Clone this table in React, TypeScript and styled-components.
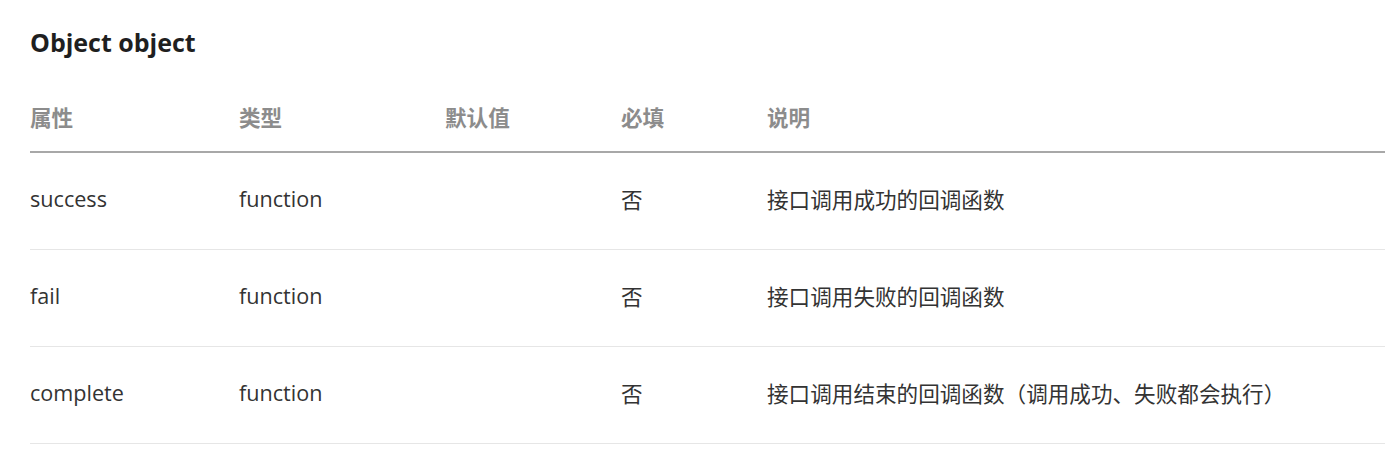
import React from 'react';
import styled, { createGlobalStyle } from 'styled-components';

const GlobalStyle = createGlobalStyle`
  html, body {
    margin: 0;
    padding: 0;
    background: #fff;
  }
  body {
    font-family: 'Open Sans', 'Noto Sans CJK SC', sans-serif;
  }
`;

const Page = styled.div`
  padding-left: 30px;
`;

const Title = styled.h3`
  margin: 0;
  height: 85px;
  display: flex;
  align-items: center;
  padding-bottom: 0;
  font-size: 25px;
  font-weight: 700;
  color: #1f1f1f;
  line-height: 1;
  box-sizing: border-box;
`;

const Table = styled.table`
  width: 1355px;
  border-collapse: collapse;
  table-layout: fixed;
  font-size: 21.6px;
`;

const HeadCell = styled.th`
  height: 63px;
  padding: 0;
  padding-bottom: 3px;
  text-align: left;
  font-weight: 700;
  color: #8c8c8c;
  border-bottom: 2px solid #a8a8a8;
  vertical-align: middle;
`;

const Row = styled.tr`
  border-bottom: 1px solid #e6e6e6;
`;

const Cell = styled.td`
  height: 91px;
  padding: 0 0 5px;
  color: #333;
  vertical-align: middle;
`;

const columns = [
  { label: '属性', width: 209 },
  { label: '类型', width: 206 },
  { label: '默认值', width: 176 },
  { label: '必填', width: 146 },
  { label: '说明', width: undefined },
];

const rows = [
  { name: 'success', type: 'function', def: '', req: '否', desc: '接口调用成功的回调函数' },
  { name: 'fail', type: 'function', def: '', req: '否', desc: '接口调用失败的回调函数' },
  {
    name: 'complete',
    type: 'function',
    def: '',
    req: '否',
    desc: '接口调用结束的回调函数（调用成功、失败都会执行）',
  },
];

const App = () => {
  return (
    <Page>
      <GlobalStyle />
      <Title>Object object</Title>
      <Table>
        <colgroup>
          {columns.map((c) => (
            <col key={c.label} style={c.width ? { width: c.width } : undefined} />
          ))}
        </colgroup>
        <thead>
          <tr>
            {columns.map((c) => (
              <HeadCell key={c.label}>{c.label}</HeadCell>
            ))}
          </tr>
        </thead>
        <tbody>
          {rows.map((r) => (
            <Row key={r.name}>
              <Cell>{r.name}</Cell>
              <Cell>{r.type}</Cell>
              <Cell>{r.def}</Cell>
              <Cell>{r.req}</Cell>
              <Cell>{r.desc}</Cell>
            </Row>
          ))}
        </tbody>
      </Table>
    </Page>
  );
};

export default App;
